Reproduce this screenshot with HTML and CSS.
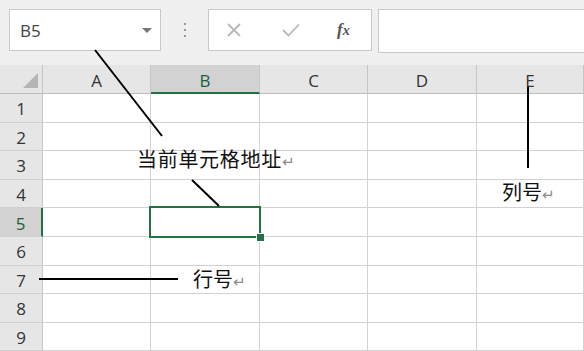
FILE: index.html
```html
<!DOCTYPE html>
<html lang="zh-CN">
<head>
    <meta charset="UTF-8">
    <meta name="viewport" content="width=device-width, initial-scale=1.0">
    <title>单元格地址</title>
    <link rel="stylesheet" href="styles.css">
</head>
<body>
    <div id="page">
        <div class="toolbar">
            <div class="namebox">
                <span>B5</span>
                <span class="caret"></span>
            </div>
            <div class="grip"><i></i><i></i><i></i></div>
            <div class="fbtns">
                <svg class="ico-x" width="14" height="14" viewBox="0 0 14 14"><path d="M1 1L13 13M13 1L1 13"/></svg>
                <svg class="ico-ok" width="18" height="14" viewBox="0 0 18 14"><path d="M1 7L6.5 12.5L17 1.5"/></svg>
                <span class="fx"><i>f</i><i class="x">x</i></span>
            </div>
            <div class="fbar"></div>
        </div>

        <div class="sheet">
            <div class="row head">
                <div class="corner"><span></span></div>
                <div class="ch">A</div>
                <div class="ch sel">B</div>
                <div class="ch">C</div>
                <div class="ch">D</div>
                <div class="ch">E</div>
            </div>
            <div class="row"><div class="rh">1</div><div></div><div></div><div></div><div></div><div></div></div>
            <div class="row"><div class="rh">2</div><div></div><div></div><div></div><div></div><div></div></div>
            <div class="row"><div class="rh">3</div><div></div><div></div><div></div><div></div><div></div></div>
            <div class="row"><div class="rh">4</div><div></div><div></div><div></div><div></div><div></div></div>
            <div class="row"><div class="rh sel">5</div><div></div><div class="active"></div><div></div><div></div><div></div></div>
            <div class="row"><div class="rh">6</div><div></div><div></div><div></div><div></div><div></div></div>
            <div class="row"><div class="rh">7</div><div></div><div></div><div></div><div></div><div></div></div>
            <div class="row"><div class="rh">8</div><div></div><div></div><div></div><div></div><div></div></div>
            <div class="row"><div class="rh">9</div><div></div><div></div><div></div><div></div><div></div></div>
        </div>

        <!-- 标注 -->
        <svg class="marks" width="584" height="351" viewBox="0 0 584 351">
            <line x1="95" y1="50" x2="162" y2="136"/>
            <line x1="192" y1="180" x2="219" y2="206"/>
            <line x1="528" y1="87" x2="528" y2="168"/>
            <line x1="39" y1="279" x2="178" y2="279"/>
        </svg>
        <div class="note note-addr">当前单元格地址<span class="ret">↵</span></div>
        <div class="note note-col">列号<span class="ret">↵</span></div>
        <div class="note note-row">行号<span class="ret">↵</span></div>
    </div>
</body>
</html>
```
FILE: styles.css
```css
body {
    margin: 0;
    font-family: "Open Sans", "Liberation Sans", sans-serif;
    background: #fff;
}

#page {
    position: relative;
    width: 584px;
    height: 351px;
    overflow: hidden;
}

/* 编辑栏 */
.toolbar {
    height: 65px;
    box-sizing: border-box;
    padding: 9px 0 0 9px;
    background: #f0f0f0;
    display: flex;
    align-items: flex-start;
}

.namebox {
    width: 152px;
    height: 42px;
    box-sizing: border-box;
    border: 1px solid #c8c8c8;
    background: #fff;
    display: flex;
    align-items: center;
    justify-content: space-between;
    padding: 0 8px 0 10px;
    font-size: 17px;
    color: #444;
}

.caret {
    width: 0;
    height: 0;
    border-left: 5px solid transparent;
    border-right: 5px solid transparent;
    border-top: 5px solid #777;
}

.grip {
    width: 47px;
    height: 42px;
    display: flex;
    flex-direction: column;
    align-items: center;
    justify-content: center;
    gap: 4px;
}

.grip i {
    width: 2px;
    height: 2px;
    background: #9a9a9a;
}

.fbtns {
    width: 164px;
    height: 42px;
    box-sizing: border-box;
    border: 1px solid #c8c8c8;
    background: #fff;
    display: flex;
    align-items: center;
    padding-left: 18px;
}

.fbtns svg {
    fill: none;
    stroke: #b9b9b9;
    stroke-width: 1.8;
}

.ico-ok {
    margin-left: 41px;
}

.fx {
    margin-left: 37px;
    font-family: "Liberation Serif", serif;
    font-weight: bold;
    font-size: 17px;
    color: #555;
}

.fx .x {
    font-size: 14px;
}

.fbar {
    flex: 1;
    height: 42px;
    margin-left: 6px;
    margin-right: -2px;
    border: 1px solid #c8c8c8;
    background: #fff;
}

/* 表格 */
.row {
    display: grid;
    grid-template-columns: 43px 108px 109px 108px 109px 1fr;
    height: 28.6px;
}

.row > div {
    border-right: 1px solid #d2d2d2;
    border-bottom: 1px solid #d2d2d2;
}

.row.head {
    height: 29px;
}

.head > div {
    background: #e6e6e6;
    border-right-color: #c6c6c6;
    border-bottom: 1px solid #bcbcbc;
    display: flex;
    align-items: center;
    justify-content: center;
    font-size: 17px;
    color: #333;
    padding-top: 3px;
}

.head .ch.sel {
    background: #d2d2d2;
    border-bottom: 2px solid #217346;
    color: #1f5e3b;
}

.corner {
    position: relative;
}

.corner span {
    position: absolute;
    right: 4px;
    bottom: 5px;
    width: 0;
    height: 0;
    border-left: 15px solid transparent;
    border-bottom: 15px solid #b5b5b5;
}

.row > .rh {
    background: #e6e6e6;
    border-right-color: #c6c6c6;
    border-bottom-color: #d0d0d0;
    display: flex;
    align-items: center;
    justify-content: center;
    font-size: 17px;
    color: #333;
    padding-top: 2px;
}

.row > .rh.sel {
    background: #d2d2d2;
    border-right: 2px solid #217346;
    color: #1f5e3b;
}

.active {
    position: relative;
}

.active::before {
    content: "";
    position: absolute;
    left: -2px;
    top: -2px;
    right: -2px;
    bottom: -2px;
    border: 2px solid #217346;
}

.active::after {
    content: "";
    position: absolute;
    right: -6px;
    bottom: -6px;
    width: 7px;
    height: 7px;
    background: #217346;
    border: 1px solid #fff;
}

/* 标注 */
.marks {
    position: absolute;
    left: 0;
    top: 0;
}

.marks line {
    stroke: #000;
    stroke-width: 2;
}

.note {
    position: absolute;
    font-family: "Noto Sans CJK SC", sans-serif;
    font-size: 20px;
    line-height: 24px;
    color: #111;
    white-space: nowrap;
}

.ret {
    font-family: "DejaVu Sans", sans-serif;
    font-size: 15px;
    color: #8a8a8a;
}

.note-addr {
    left: 137px;
    top: 147px;
    letter-spacing: 0.7px;
}

.note-col {
    left: 502px;
    top: 180px;
}

.note-row {
    left: 193px;
    top: 267px;
}
```
